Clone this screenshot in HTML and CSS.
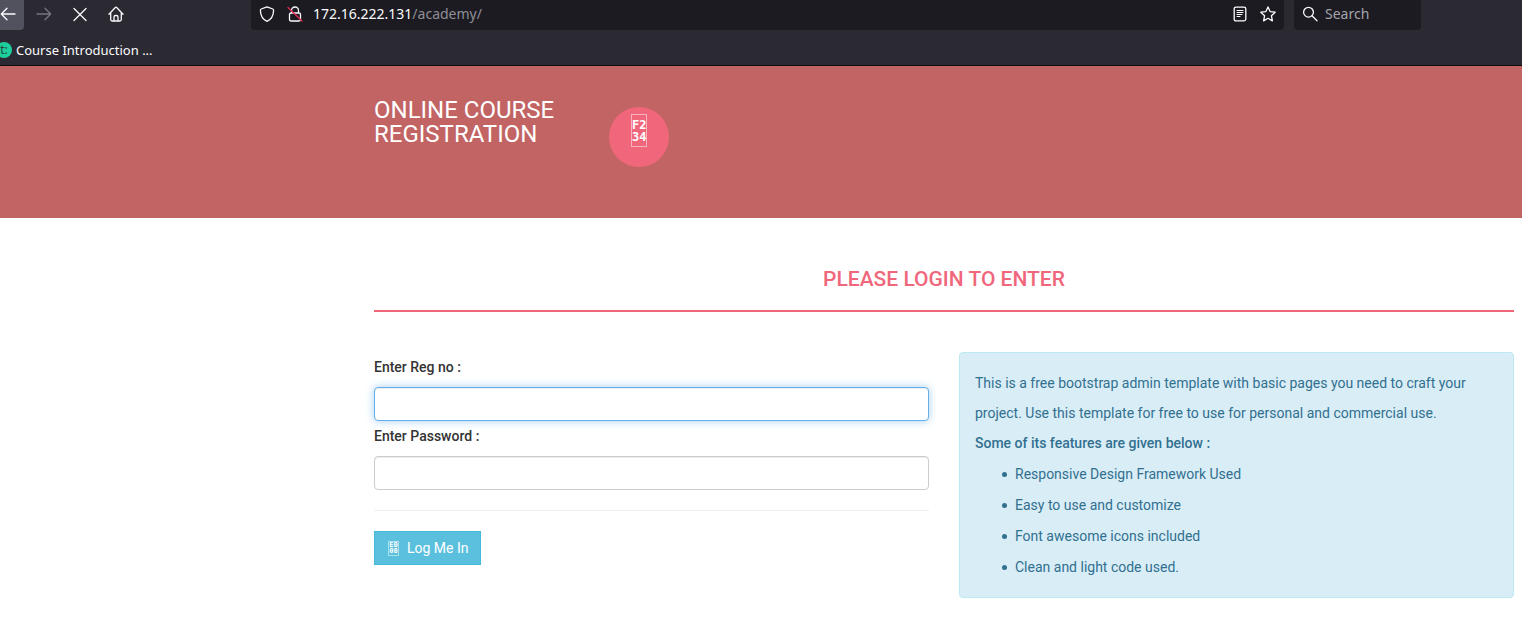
FILE: index.html
```html
<!DOCTYPE html>
<html lang="en">
<head>
<meta charset="utf-8">
<title>Online Course Registration</title>
<link rel="stylesheet" href="styles.css">
</head>
<body>
<div class="browser">
  <div class="toolbar">
    <div class="nav">
      <button class="nav-btn nav-btn-active" type="button" aria-label="Back"><svg viewBox="0 0 16 16"><path d="M15 8H1.500M7 2.200 1.300 8 7 13.800"/></svg></button>
      <button class="nav-btn nav-btn-dim" type="button" aria-label="Forward"><svg viewBox="0 0 16 16"><path d="M1 8h13.500M9 2.200 14.700 8 9 13.800"/></svg></button>
      <button class="nav-btn" type="button" aria-label="Stop"><svg viewBox="0 0 16 16"><path d="M2 2.500l12 12M14 2.500l-12 12"/></svg></button>
      <button class="nav-btn" type="button" aria-label="Home"><svg viewBox="0 0 16 16"><path d="M1 8.200 7.300 1.500q.7-.7 1.400 0L15 8.200M2.700 7v6.500q0 1.500 1.500 1.500h7.600q1.500 0 1.500-1.500V7M6 15v-4q0-1.500 1.500-1.500h1q1.500 0 1.500 1.500v4"/></svg></button>
    </div>
    <div class="urlbar">
      <div class="icon-group">
        <svg class="bar-icon" viewBox="0 0 16 16"><path d="M8 .8 13.800 3q.8.300.8 1.300C14.500 9.500 12.300 13.500 8 15.300 3.700 13.500 1.500 9.500 1.400 4.300 1.400 3.300 2.200 3 2.200 3z"/></svg>
        <svg class="bar-icon" viewBox="0 0 16 16"><path d="M4.500 7V4.500a3.500 3.500 0 0 1 7 0V7M4 7h8q1.500 0 1.500 1.500v5q0 1.500-1.500 1.500H4q-1.500 0-1.500-1.500v-5Q2.500 7 4 7z"/><path class="slash" d="M1 1.500l14 13.500"/></svg>
      </div>
      <div class="address"><span class="host">172.16.222.131</span>/academy/</div>
      <div class="icon-group">
        <svg class="bar-icon" viewBox="0 0 16 16"><path d="M4 1.200h8q1.800 0 1.800 1.500v10.600q0 1.500-1.800 1.500H4q-1.800 0-1.800-1.500V2.700Q2.200 1.200 4 1.200z"/><path class="thin" d="M5 4.500h6M5 6.500h6M5 8.500h5M5 10.500h3"/></svg>
        <svg class="bar-icon" viewBox="0 0 16 16"><path d="M8 .9l2.100 4.700 5.100.6-3.800 3.500 1 5.200L8 12.300l-4.400 2.600 1-5.200L.8 6.200l5.100-.6z"/></svg>
      </div>
    </div>
    <label class="searchbar">
      <svg class="bar-icon" viewBox="0 0 16 16"><circle cx="6.500" cy="6.200" r="4.900"/><path d="M10 9.700l5 5"/></svg>
      <input class="search-input" type="text" placeholder="Search" aria-label="Search">
    </label>
  </div>
  <div class="bookmarks">
    <a class="bookmark" href="#"><span class="favicon">t:</span>Course Introduction ...</a>
  </div>
</div>

<header class="site-header">
  <h1 class="site-title">ONLINE COURSE REGISTRATION</h1>
  <div class="badge"><span class="code code-large">F2<br>34</span></div>
</header>

<main class="content">
  <h2 class="page-head">PLEASE LOGIN TO ENTER</h2>
  <div class="columns">
    <form class="login">
      <label class="field-label" for="regno">Enter Reg no :</label>
      <input class="field field-focus" id="regno" type="text">
      <label class="field-label" for="password">Enter Password :</label>
      <input class="field" id="password" type="password">
      <hr class="rule">
      <button class="submit" type="button"><span class="code code-small">E0<br>08</span>Log Me In</button>
    </form>
    <section class="info">
      <p class="info-text">This is a free bootstrap admin template with basic pages you need to craft your project. Use this template for free to use for personal and commercial use.</p>
      <strong class="info-strong">Some of its features are given below :</strong>
      <ul class="features">
        <li class="feature">Responsive Design Framework Used</li>
        <li class="feature">Easy to use and customize</li>
        <li class="feature">Font awesome icons included</li>
        <li class="feature">Clean and light code used.</li>
      </ul>
    </section>
  </div>
</main>
</body>
</html>
```
FILE: styles.css
```css
* { box-sizing: border-box; }

body {
  margin: 0;
  background: #fff;
  color: #333;
  font: 14px/30px Roboto, sans-serif;
}

.browser {
  background: #2b2a33;
  border-bottom: 1px solid #0c0c0d;
  color: #fbfbfe;
  font-family: "Noto Sans", sans-serif;
}

.toolbar {
  display: flex;
  height: 30px;
  gap: 10px;
  padding-right: 101px;
}

.nav {
  display: flex;
  gap: 4px;
  width: 241px;
}

.nav-btn {
  display: flex;
  align-items: center;
  justify-content: center;
  width: 32px;
  height: 30px;
  padding: 0 0 2px;
  border: 0;
  background: none;
  color: #fbfbfe;
}

.nav-btn svg, .bar-icon {
  flex: none;
  width: 16px;
  height: 16px;
  fill: none;
  stroke: currentColor;
  stroke-width: 1.3;
  stroke-linecap: round;
  stroke-linejoin: round;
}

.nav-btn-active {
  width: 24px;
  padding-right: 8px;
  border-radius: 0 0 4px 0;
  background: #52525e;
}

.nav-btn-dim { color: #77767d; }

.urlbar, .searchbar {
  display: flex;
  align-items: center;
  background: #1c1b22;
  border-radius: 0 0 4px 4px;
  height: 30px;
  padding: 0 8px 2px;
}

.urlbar {
  flex: 1;
  gap: 10px;
}

.icon-group {
  display: flex;
  gap: 12px;
}

.address {
  flex: 1;
  color: #8f8f96;
  font-size: 14px;
  line-height: 28px;
}

.host { color: #fbfbfe; }

.slash { stroke: #e22850; }

.thin { stroke-width: 1; }

.searchbar {
  width: 127px;
  gap: 7px;
}

.search-input {
  width: 80px;
  padding: 0;
  border: 0;
  background: none;
  color: #fbfbfe;
  font: 14px/28px "Noto Sans", sans-serif;
}

.search-input::placeholder { color: #a5a5ab; }

.bookmarks {
  display: flex;
  align-items: center;
  height: 35px;
  padding-top: 5px;
}

.bookmark {
  display: flex;
  align-items: center;
  gap: 4px;
  margin-left: -4px;
  color: #fbfbfe;
  font-size: 13px;
  text-decoration: none;
}

.favicon {
  width: 16px;
  height: 16px;
  border-radius: 50%;
  background: #1fce9d;
  color: #20403c;
  font-size: 12px;
  line-height: 15px;
  text-align: center;
}

.site-header {
  display: flex;
  gap: 30px;
  min-height: 152px;
  padding: 32px 8px 32px 374px;
  background: #c26464;
  color: #fff;
}

.site-title {
  width: 205px;
  margin: 0;
  font-size: 24px;
  font-weight: 400;
  line-height: 24px;
}

.badge {
  display: flex;
  justify-content: center;
  width: 60px;
  height: 60px;
  margin-top: 9px;
  padding-top: 7px;
  border-radius: 50%;
  background: #f0677c;
}

.code {
  border: 1px solid rgba(255, 255, 255, 0.5);
  font-family: "DejaVu Sans Mono", monospace;
  font-weight: 700;
}

.code-large {
  width: 16px;
  height: 33px;
  padding-top: 4px;
  font-size: 12px;
  line-height: 12px;
}

.code-small {
  width: 11px;
  height: 15px;
  font-size: 7px;
  line-height: 6px;
}

.content { padding: 46px 8px 43px 374px; }

.page-head {
  margin: 0 0 40px;
  padding-bottom: 16px;
  border-bottom: 2px solid #f0677c;
  color: #f0677c;
  font-size: 21px;
  font-weight: 500;
  line-height: 30px;
  text-align: center;
}

.columns {
  display: grid;
  grid-template-columns: 1fr 1fr;
  gap: 30px;
  align-items: start;
}

.login {
  display: flex;
  flex-direction: column;
}

.field-label {
  margin-bottom: 5px;
  font-weight: 500;
}

.field {
  width: 100%;
  height: 34px;
  padding: 6px 12px;
  border: 1px solid #ccc;
  border-radius: 4px;
  outline: 0;
  background: #fff;
  box-shadow: inset 0 1px 1px rgba(0, 0, 0, 0.075);
  color: #555;
  font: 14px/20px Roboto, sans-serif;
}

.field-focus {
  border-color: #66afe9;
  box-shadow: inset 0 1px 1px rgba(0, 0, 0, 0.075), 0 0 8px rgba(102, 175, 233, 0.6);
}

.rule {
  width: 100%;
  margin: 20px 0;
  border: 0;
  border-top: 1px solid #eee;
}

.submit {
  display: flex;
  align-items: center;
  align-self: flex-start;
  gap: 8px;
  height: 34px;
  padding: 0 11px 0 13px;
  border: 1px solid #46b8da;
  background: #5bc0de;
  color: #fff;
  font: 14px/20px Roboto, sans-serif;
}

.info {
  padding: 15px;
  border: 1px solid #bce8f1;
  border-radius: 4px;
  background: #d9edf7;
  color: #31708f;
}

.info-text { margin: 0; }

.info-strong {
  display: block;
  font-weight: 500;
}

.features {
  margin: 0;
  padding: 0 0 0 27px;
  list-style: none;
}

.feature {
  display: flex;
  align-items: center;
  gap: 8px;
  padding-top: 1px;
}

.feature::before {
  content: "";
  width: 5px;
  height: 5px;
  border-radius: 50%;
  background: currentColor;
}
```
